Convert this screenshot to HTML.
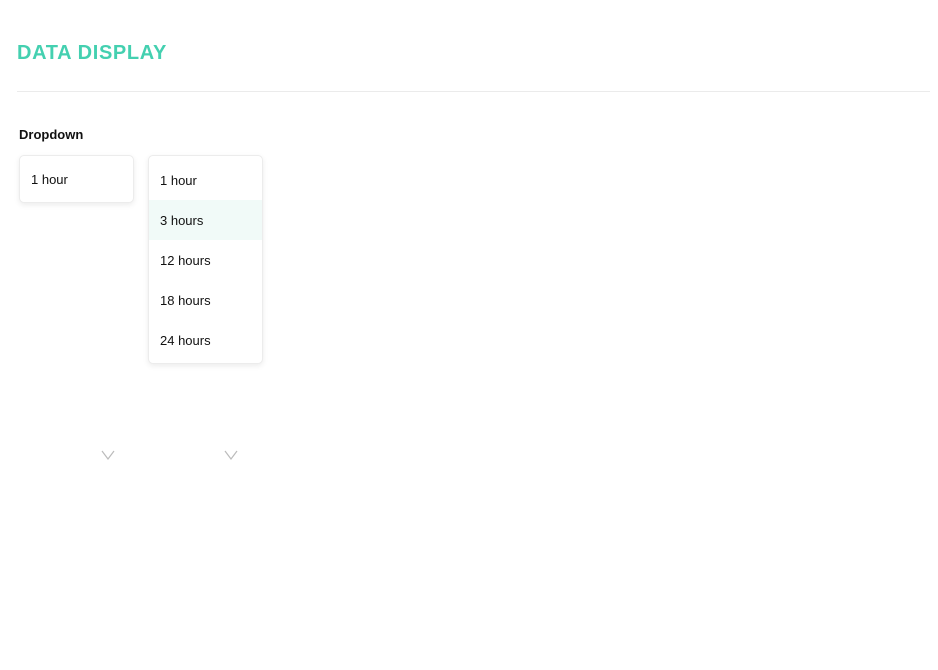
<!DOCTYPE html>
<html><head><meta charset="utf-8"><style>
*{box-sizing:border-box;margin:0;padding:0}
body{width:938px;height:670px;background:#fff;font-family:"Liberation Sans",Arial,sans-serif;position:relative;overflow:hidden}
h1{position:absolute;left:17px;top:42px;font-size:20px;font-weight:700;color:#44d0b0;letter-spacing:0.65px}
.hr{position:absolute;left:17px;top:91px;width:913px;height:1px;background:#ebebeb}
.lbl{position:absolute;left:19px;top:127px;font-size:13px;font-weight:700;color:#111}
.box{position:absolute;background:#fff;border:1px solid #ececec;border-radius:5px;box-shadow:0 2px 6px rgba(0,0,0,0.08)}
.item{height:40px;line-height:42px;padding-left:11px;font-size:13px;color:#111}
.hl{background:#f1faf8}
.chev{position:absolute;top:450px}
</style></head><body>
<h1>DATA DISPLAY</h1>
<div class="hr"></div>
<div class="lbl">Dropdown</div>
<div class="box" style="left:19px;top:155px;width:115px;height:48px"><div class="item" style="line-height:48px;height:46px">1 hour</div></div>
<div class="box" style="left:148px;top:155px;width:115px;height:209px;padding-top:4px;overflow:hidden">
<div class="item">1 hour</div>
<div class="item hl">3 hours</div>
<div class="item">12 hours</div>
<div class="item">18 hours</div>
<div class="item">24 hours</div>
</div>
<svg class="chev" style="left:101px" width="14" height="10"><path d="M1 1 L7 9 L13 1" fill="none" stroke="#bbb" stroke-width="1.2"/></svg>
<svg class="chev" style="left:224px" width="14" height="10"><path d="M1 1 L7 9 L13 1" fill="none" stroke="#bbb" stroke-width="1.2"/></svg>
</body></html>
